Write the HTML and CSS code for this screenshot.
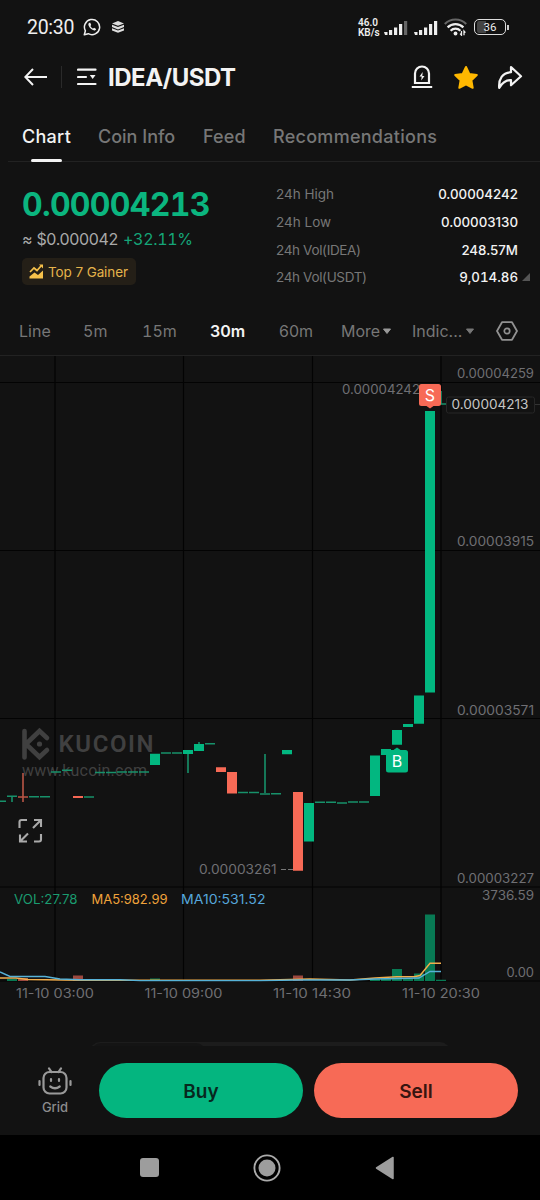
FILE: index.html
```html
<!DOCTYPE html>
<html lang="en">
<head>
<meta charset="utf-8">
<title>IDEA/USDT</title>
<link rel="stylesheet" href="styles.css">
</head>
<body>
<div class="app">
  <div class="status">
    <span class="clock">20:30</span>
    <svg class="wa" width="18" height="18" viewBox="0 0 18 18"><path d="M1.300 16.800l1.100-4A7.600 7.600 0 1 1 5.300 15.700z" fill="none" stroke="#eee" stroke-width="1.500" stroke-linejoin="round"/><path d="M6.300 4.700c-.9.500-1.200 1.600-.7 2.800 1 2.400 2.700 4 5 4.800 1.200.4 2.300-.2 2.500-1.400l-2-1.200-1 .9c-1.200-.5-2.200-1.500-2.700-2.600l.8-1-.9-2.200z" fill="#eee"/></svg>
    <svg class="layers" width="14" height="12" viewBox="0 0 14 12"><path d="M7 0l6 2.400-6 2.400-6-2.400zM1 3.800l6 2.300 6-2.300v2.300L7 8.500 1 6.100zM1 7.300l6 2.300 6-2.300v2.100l-6 2.400-6-2.400z" fill="#ddd"/></svg>
    <span class="speed">46.0<br>KB/s</span>
    <svg class="sig" width="24" height="15" viewBox="0 0 24 15"><path d="M0 12h3.500v3H1zM5 10h3.200v5H5zM10 7.500h3.200V15H10zM15 4h3.200v11H15z" fill="#eee"/><path d="M20 1h3.200v14H20z" fill="#666"/></svg>
    <svg class="sig two" width="24" height="15" viewBox="0 0 24 15"><path d="M0 12h3.500v3H1zM5 10h3.200v5H5zM10 7.500h3.200V15H10zM15 4h3.200v11H15zM20 1h3.200v14H20z" fill="#eee"/></svg>
    <svg class="wifi" width="23" height="18" viewBox="0 0 23 18"><g fill="none" stroke-width="2.200"><path d="M.8 6a15 15 0 0 1 21.400 0" stroke="#666"/><path d="M3.600 9.400a11.200 11.200 0 0 1 15.800 0M6.600 12.700a7 7 0 0 1 9.800 0" stroke="#eee"/></g><circle cx="11.500" cy="15.500" r="1.900" fill="#eee"/><path d="M17.500 13v4.200l-1.400-1.600M20 17.200V13l1.400 1.600" fill="none" stroke="#eee" stroke-width="1.300"/></svg>
    <span class="battery">36</span><i class="nub"></i>
  </div>

  <header class="head">
    <svg class="back" width="24" height="18" viewBox="0 0 24 18"><path d="M9 1L1.300 9 9 17M1.500 9H23" fill="none" stroke="#f3f3f3" stroke-width="2"/></svg>
    <i class="split"></i>
    <svg class="menu" width="20" height="18" viewBox="0 0 20 18"><path d="M1 1.700h17.500M1 9h8M1 16h17.500" stroke="#f3f3f3" stroke-width="2.200" stroke-linecap="round"/><path d="M12.800 7h5.700l-2.800 4z" fill="#f3f3f3"/></svg>
    <h1>IDEA/USDT</h1>
    <svg class="alert" width="22" height="24" viewBox="0 0 22 24"><path d="M4 18V8.500a7 7 0 0 1 14 0V18zM.8 22h20.400" fill="none" stroke="#f3f3f3" stroke-width="2.200"/><path d="M11.700 7L8.500 11.500h2.200l-.5 4L13.500 11h-2.200z" fill="#f3f3f3"/></svg>
    <svg class="star" width="26" height="25" viewBox="0 0 26 25"><path d="M13 2l3.300 6.900 7.500 1.100-5.400 5.300 1.300 7.500-6.700-3.500-6.700 3.500 1.300-7.500L2.200 10l7.500-1.100z" fill="#ffb800" stroke="#ffb800" stroke-width="2" stroke-linejoin="round"/></svg>
    <svg class="share" width="26" height="25" viewBox="0 0 26 25"><path d="M14 7.200V2l10 9.300-10 9v-5.200c-5.400-.4-8.800 2.500-11.800 7.800C1.400 14 5.500 7.600 14 7.200z" fill="none" stroke="#f3f3f3" stroke-width="2.200" stroke-linejoin="round"/></svg>
  </header>

  <nav class="tabs">
    <span class="tab on">Chart</span><span class="tab t2">Coin Info</span><span class="tab t3">Feed</span><span class="tab t4">Recommendations</span>
  </nav>

  <section class="summary">
    <div class="quote">
      <div class="price">0.00004213</div>
      <div class="fiat"><span class="approx">≈ $0.000042</span><span class="up">+32.11%</span></div>
      <div class="badge"><svg width="15" height="15" viewBox="0 0 15 15"><path d="M1 8l4-4 3 2.500L12 2" fill="none" stroke="#f6c14b" stroke-width="1.700"/><path d="M10 .5h4v4zM.5 12.500l5-4 3.500 2.500L14 6.500v8H.5z" fill="#f6c14b"/></svg><span>Top 7 Gainer</span></div>
    </div>
    <dl class="stats">
      <div><dt class="a">24h High</dt><dd class="n1">0.00004242</dd></div>
      <div><dt class="b">24h Low</dt><dd class="n2">0.00003130</dd></div>
      <div><dt class="c">24h Vol(IDEA)</dt><dd class="n3">248.57M</dd></div>
      <div><dt class="d">24h Vol(USDT)</dt><dd class="n4">9,014.86</dd></div>
      <i class="corner"></i>
    </dl>
  </section>

  <div class="frames">
    <span class="f1">Line</span><span class="f2">5m</span><span class="f3">15m</span><span class="f4 sel">30m</span><span class="f5">60m</span><span class="f6">More</span>
    <svg class="caret" width="10" height="7" viewBox="0 0 10 7"><path d="M1.500 1h7L5 5.500z" fill="#999" stroke="#999" stroke-linejoin="round"/></svg>
    <span class="f7">Indic...</span>
    <svg class="caret c2" width="10" height="7" viewBox="0 0 10 7"><path d="M1.500 1h7L5 5.500z" fill="#777" stroke="#777" stroke-linejoin="round"/></svg>
    <svg class="hex" width="22" height="20" viewBox="0 0 22 20"><path d="M6 1.200h10L21 10l-5 8.800H6L1 10z" fill="none" stroke="#919191" stroke-width="1.800" stroke-linejoin="round"/><circle cx="11" cy="10" r="2.700" fill="none" stroke="#919191" stroke-width="1.700"/></svg>
  </div>

  <svg class="chart" width="540" height="655" viewBox="0 355 540 655">
    <path d="M0 355.500H540" stroke="#222"/>
    <path class="grid" d="M0 382.500H540M0 550.500H540M0 718.500H540M0 887H540M0 981H540M55 356V981M183.500 356V981M312.500 356V981M441 356V981"/>
    <g class="mark">
      <path d="M24.500 731v26.500M26 744l13.500-13 7.500 7M26 744l13.500 13 7.500-7" fill="none" stroke="#404040" stroke-width="4.600" stroke-linecap="round"/>
      <circle cx="39.500" cy="744" r="2.600" fill="#404040"/>
      <text x="58.500" y="752" textLength="95" font-size="24" font-weight="600" class="din">KUCOIN</text>
      <text x="22" y="776" textLength="125" font-size="16" class="rob">www.kucoin.com</text>
    </g>
    <g class="axis">
      <text x="457" y="378" textLength="77" lengthAdjust="spacingAndGlyphs">0.00004259</text>
      <text x="457" y="546" textLength="77" lengthAdjust="spacingAndGlyphs">0.00003915</text>
      <text x="457" y="715" textLength="77" lengthAdjust="spacingAndGlyphs">0.00003571</text>
      <text x="457" y="883" textLength="77" lengthAdjust="spacingAndGlyphs">0.00003227</text>
      <text x="482" y="899.500" textLength="52" lengthAdjust="spacingAndGlyphs">3736.59</text>
      <text x="506.500" y="977" textLength="27.500" lengthAdjust="spacingAndGlyphs">0.00</text>
      <text x="342" y="393.500" textLength="78" lengthAdjust="spacingAndGlyphs">0.00004242</text>
      <text x="199" y="873.500" textLength="77.500" lengthAdjust="spacingAndGlyphs">0.00003261</text>
      <text x="16" y="998" textLength="78" lengthAdjust="spacingAndGlyphs">11-10 03:00</text>
      <text x="144.500" y="998" textLength="78" lengthAdjust="spacingAndGlyphs">11-10 09:00</text>
      <text x="273" y="998" textLength="78" lengthAdjust="spacingAndGlyphs">11-10 14:30</text>
      <text x="402" y="998" textLength="78" lengthAdjust="spacingAndGlyphs">11-10 20:30</text>
    </g>
    <path d="M281 869.500h12" stroke="#777" stroke-dasharray="5 2"/>
    <g class="thin"><path d="M0 801.300h6M7 796.200h10M29 796.800h10M40 796.800h10M84 797h10M51 772h10M62 770.300h10M95 772.500h10M106 772.500h10M117 772h10M128 772h10M139 772h10M161 753h10M172 753h10M205 743.700h10M238 792.500h10M249 792.500h10M260 794h10M271 793.800h10M315 802.300h10M326 802.300h10M337 803h10M348 802h10M359 802h10M436 404h10"/><path d="M12 796v6M188 752v21M199 742v4M265 754v39M441 391v13"/></g>
    <path d="M18 797h10M23 773v29" stroke="#ba5646" stroke-width="1.600"/><path d="M73 797h10" stroke="#f66754" stroke-width="2"/>
    <path class="green" d="M150 753.700h10v11.300h-10zM183 750h10v4h-10zM194 744h10v7h-10zM282 750h10v4.300h-10zM304 803h10v38.600h-10zM370 755.500h10V796h-10zM381 749h10v6h-10zM392 730h10v14.700h-10zM403 724h10v3h-10zM414 695.500h10v28.200h-10zM425 411h10v281.500h-10z"/>
    <path class="red" d="M216 767.300h10v4.700h-10zM227 772h10v21.500h-10zM293 792h10v78.800h-10z"/>
    <path class="red" d="M421.500 384h17q2.500 0 2.500 2.500v17q0 2.500-2.500 2.500h-5l-3.500 2.500-3.500-2.500h-5q-2.500 0-2.500-2.500v-17q0-2.500 2.500-2.500z"/>
    <path class="green" d="M388.500 750h5l3.500-2.500 3.500 2.500h5q2.500 0 2.500 2.500v17.500q0 2.500-2.500 2.500h-17q-2.500 0-2.500-2.500v-17.500q0-2.500 2.500-2.500z"/>
    <text x="430" y="400.500" class="pin">S</text><text x="397" y="767" class="pin">B</text>
    <path d="M535 404.500h5" stroke="#333"/>
    <rect x="446.500" y="397" width="88" height="16" rx="2" fill="#121212" stroke="#262626"/>
    <text x="451.500" y="409.200" textLength="77" lengthAdjust="spacingAndGlyphs" class="now">0.00004213</text>
    <g class="legend">
      <text x="14" y="903.500" textLength="63.500" lengthAdjust="spacingAndGlyphs" fill="#1a9c70">VOL:27.78</text>
      <text x="91.500" y="903.500" textLength="76" lengthAdjust="spacingAndGlyphs" fill="#f0a33b">MA5:982.99</text>
      <text x="181" y="903.500" textLength="84.500" lengthAdjust="spacingAndGlyphs" fill="#56a7dc">MA10:531.52</text>
    </g>
    <path d="M7 979h10v2H7zM150 978.500h10v2.500h-10zM370 979h10v2h-10zM381 978.500h10v2.500h-10zM392 969h10v12h-10zM403 978.500h10v2.500h-10zM414 973.500h10v7.500h-10zM425 914.500h10V981h-10zM436 979.800h10v1.200h-10z" fill="#087a54"/>
    <path d="M18 978h10v3H18zM73 975.500h10v5.500H73zM293 975.500h10v5.500h-10z" fill="#9d493f"/>
    <path d="M0 978H16L28 979.500 80 980.300H260L310 979 350 980 375 978 397 976.800H414L420 975.500 430 963.300H441" class="ma" stroke="#f2ae4d"/>
    <path d="M0 972L10 976.500H45L60 979 80 979.700H120L140 980.600H260L300 980H350L375 979 419 978 430 971.500H441" class="ma" stroke="#57b2d7"/>
    <g fill="none" stroke="#aaa" stroke-width="2.100"><path d="M19.500 828V822Q19.500 820 21.500 820H27M34 841.500h5q2 0 2-2V834"/><path d="M34 820h7v7M41 820l-8 8M27 841.500h-7v-7M20 841.500l8-8"/></g>
  </svg>

  <div class="peek"><div class="sheet"><i></i></div></div>

  <footer class="actions">
    <div class="bot">
      <svg width="34" height="29" viewBox="0 0 34 29"><g fill="none" stroke="#999" stroke-width="2.200" stroke-linecap="round"><rect x="5.500" y="5" width="23" height="21.500" rx="6"/><path d="M13.500 5L11 1.300M20.500 5L23 1.300M1.500 14v4M32.500 14v4M13 12v2M21 12v2M12.300 19.500q4.700 3.500 9.400 0"/></g></svg>
      <span>Grid</span>
    </div>
    <button class="buy">Buy</button><button class="sell">Sell</button>
  </footer>

  <div class="sysnav">
    <i class="recent"></i>
    <svg class="home" width="28" height="28" viewBox="0 0 28 28"><circle cx="14" cy="14" r="12.600" fill="none" stroke="#ababab" stroke-width="1.900"/><circle cx="14" cy="14" r="8.500" fill="#9d9d9d"/></svg>
    <svg class="prev" width="20" height="24" viewBox="0 0 20 24"><path d="M1.500 12L18 1.500v21z" fill="#9d9d9d" stroke="#9d9d9d" stroke-width="1.500" stroke-linejoin="round"/></svg>
  </div>
</div>
</body>
</html>
```
FILE: styles.css
```css
* { box-sizing: border-box; }
body { margin: 0; background: #121212; color: #f3f3f3; font-family: Inter, "Liberation Sans", sans-serif; }
svg { display: block; flex: none; }
i { display: block; flex: none; }
span { white-space: nowrap; }
.app { width: 540px; height: 1200px; overflow: hidden; display: flex; flex-direction: column; }

.status { height: 54px; flex: none; display: flex; align-items: center; padding: 0 0 0 27px; font-family: Roboto, sans-serif; color: #eee; }
.clock { width: 47px; font-size: 19.5px; font-weight: 400; letter-spacing: -.3px; }
.wa { margin-left: 9px; }
.layers { margin-left: 10px; }
.speed { width: 22px; margin-left: 233px; padding-top: 1px; font-size: 10px; line-height: 9.5px; font-weight: 600; }
.sig { margin-left: 4px; }
.sig.two { margin-left: 6px; }
.wifi { margin-left: 6px; }
.battery { width: 32px; height: 16px; margin-left: 7px; border: 1.5px solid #ddd; border-radius: 5px; font-size: 11.5px; line-height: 14px; text-align: center; background: linear-gradient(90deg, #444 9px, transparent 9px) content-box; padding: 1px 2px; line-height: 13px; }
.nub { width: 2px; height: 5px; background: #ccc; margin-left: 1px; }

.head { height: 46px; flex: none; display: flex; align-items: center; padding-left: 24px; }
.split { width: 1px; height: 22px; background: #2a2a2a; margin-left: 13px; }
.menu { margin-left: 15px; }
h1 { width: 129px; margin: 1px 0 0 11px; font-size: 24px; line-height: 30px; font-weight: 700; letter-spacing: -.5px; white-space: nowrap; }
.alert { margin-left: 174px; }
.star { margin-left: 20px; }
.share { margin-left: 18px; }

.tabs { height: 62px; flex: none; margin-left: 8px; padding-left: 14px; border-bottom: 1px solid #222; display: flex; font-size: 18px; line-height: 73px; letter-spacing: .28px; color: #777; font-weight: 500; }
.tab.on { color: #f3f3f3; width: 49px; position: relative; }
.tab.on::after { content: ""; position: absolute; left: 9px; bottom: -1px; width: 31px; height: 3px; border-radius: 2px; background: #f3f3f3; }
.t2 { margin-left: 27px; width: 77px; letter-spacing: 0; }
.t3 { margin-left: 28px; width: 43px; letter-spacing: .1px; }
.t4 { margin-left: 27px; }

.summary { height: 145px; flex: none; display: flex; padding: 23px 22px 0; }
.quote { width: 254px; }
.price { height: 40px; line-height: 40px; font-size: 32px; font-weight: 700; letter-spacing: -.7px; color: #0bb57f; font-feature-settings: "tnum"; }
.fiat { display: flex; gap: 6px; height: 28px; line-height: 28px; font-size: 16px; color: #a9a9a9; }
.approx { width: 95px; letter-spacing: -.35px; }
.up { color: #15a578; font-feature-settings: "tnum"; letter-spacing: -.3px; }
.badge { width: 114px; height: 27px; margin-top: 5px; border-radius: 5px; background: #241f17; color: #e6b44b; display: flex; align-items: center; gap: 4px; padding-left: 7px; font-size: 13.5px; letter-spacing: -.1px; }
.stats { width: 242px; margin: -5px 0 0; font-size: 13.5px; position: relative; }
.stats div { height: 27.8px; line-height: 29px; display: flex; justify-content: space-between; }
dt { color: #777; }
.c, .d { letter-spacing: -.35px; }
dd { margin: 0; font-size: 13.3px; font-weight: 500; }
.n4 { font-feature-settings: "tnum"; }
.corner { position: absolute; right: -12px; top: 93px; border-left: 8px solid transparent; border-bottom: 8px solid #555; }

.frames { height: 48px; flex: none; display: flex; align-items: center; padding-left: 19px; font-size: 16px; color: #777; }
.f1 { width: 64px; } .f2 { width: 59px; } .f3 { width: 68px; } .f4 { width: 69px; } .f5 { width: 62px; } .f6 { width: 41px; }
.f1, .f2, .f3 { font-feature-settings: "tnum"; }
.sel { color: #f3f3f3; font-weight: 600; }
.f7 { width: 53px; margin-left: 20px; }
.hex { margin-left: 21px; }

.chart { font-family: Inter, sans-serif; }
.grid { stroke: #030303; stroke-width: 1.2; fill: none; }
.mark { fill: #404040; }
.din { font-family: Roboto, sans-serif; }
.rob { font-family: Roboto, sans-serif; }
.axis { fill: #6f6f73; font-size: 12.5px; }
.thin { stroke: #17916a; stroke-width: 1.6; fill: none; }
.green { fill: #02b780; }
.red { fill: #f76a56; }
.pin { fill: #fff; font-size: 16px; text-anchor: middle; }
.now { fill: #c6c6c6; font-size: 12.5px; }
.legend { font-size: 12.7px; }
.ma { fill: none; stroke-width: 1.4; }

.peek { height: 36px; flex: none; padding: 32px 90px 0; overflow: hidden; }
.sheet { height: 20px; border-radius: 12px; background: #1c1c1c; overflow: hidden; }
.sheet i { width: 115px; height: 20px; margin: 1px; border-radius: 12px; background: #141414; }
.actions { height: 89px; flex: none; display: flex; align-items: flex-start; padding: 17px 0 0 38px; }
.bot { width: 34px; margin-right: 27px; padding-top: 4px; display: flex; flex-direction: column; align-items: center; font-size: 13px; line-height: 23px; color: #8c8c8c; font-weight: 500; }
button { width: 204px; height: 55px; padding: 0; border: 0; border-radius: 28px; font: 600 19px/57px Inter, sans-serif; }
.buy { background: #04b57f; color: #07281e; }
.sell { background: #f76a56; color: #381510; margin-left: 11px; }
.sysnav { height: 65px; flex: none; background: #000; display: flex; align-items: center; padding-left: 140px; }
.recent { width: 19px; height: 19px; border-radius: 3px; background: #9d9d9d; }
.home { margin-left: 94px; }
.prev { margin-left: 94px; }
```
